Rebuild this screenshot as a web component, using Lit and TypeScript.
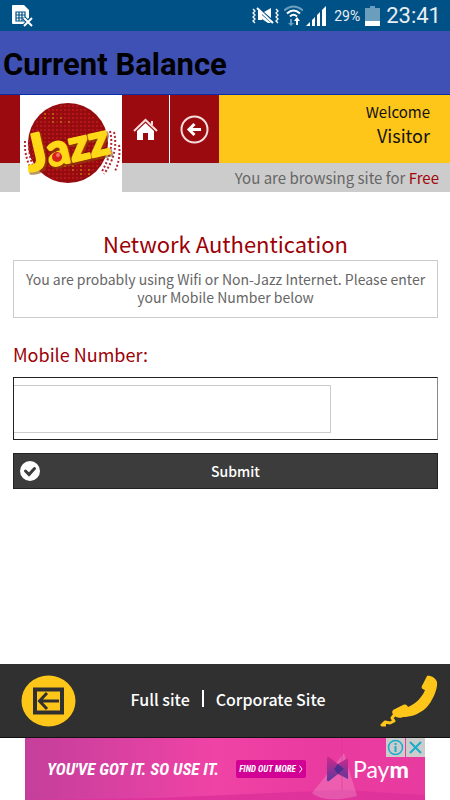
import { LitElement, html, css, svg } from "lit";
import { customElement, state } from "lit/decorators.js";

@customElement("status-bar")
export class StatusBar extends LitElement {
  static styles = css`
    :host {
      display: flex;
      align-items: center;
      height: 31px;
      padding: 0 9px 0 12px;
      background: #005286;
      color: #e8eef3;
      font-family: Roboto, sans-serif;
    }
    svg { display: block; flex: none; }
    .spacer { flex: 1; }
    .mute { margin-right: 5px; }
    .wifi { margin-right: 3px; }
    .signal { margin-right: 8px; }
    .percent { font-size: 14px; margin-right: 5px; }
    .battery { margin-right: 6px; }
    .time { font-size: 22px; line-height: 31px; }
  `;
  render() {
    return html`
      <svg width="21" height="23" viewBox="0 0 21 23" role="img" aria-label="No SIM">
        <path fill="#fff" d="M1 1H12L17 6V14L13 17V20H1Q0 20 0 19V2Q0 1 1 1Z" />
        <path fill="none" stroke="#005286" stroke-width="1.2" d="M4 8H13V17H4ZM4 11H13M4 14H13M7 8V17M10 8V17" />
        <path fill="none" stroke="#005286" stroke-width="4" d="M12 14L20 22M20 14L12 22" />
        <path fill="none" stroke="#fff" stroke-width="2" d="M12 14L20 22M20 14L12 22" />
      </svg>
      <span class="spacer"></span>
      <svg class="mute" width="27" height="19" viewBox="0 0 27 19" role="img" aria-label="Vibrate">
        <path fill="#fff" d="M6 4L10 7V14H6ZM12 6L19 2V12Z" />
        <path fill="none" stroke="#fff" stroke-width="2" d="M5 2L21 17" />
        <path fill="#fff" d="M10 9L19 17H16L10 13Z" />
        <path fill="none" stroke="#fff" stroke-width="1.3" d="M1 3L3 5L1 7L3 9L1 11L3 13L1 15L3 17M24 3L26 5L24 7L26 9L24 11L26 13L24 15L26 17" />
      </svg>
      <svg class="wifi" width="19" height="22" viewBox="0 0 19 22" role="img" aria-label="Wi-Fi">
        <g fill="none" stroke-width="2">
          <path stroke="#6b9dbd" d="M0 5.500Q9.500-2.500 19 5.500" />
          <path stroke="#fff" d="M3 8.500Q9.500 2.500 16 8.500M6 11.500Q9.500 8 13 11.500" />
        </g>
        <path fill="#6b9dbd" d="M6 14H8V18H10L7 21L4 18H6Z" />
        <path fill="#fff" d="M12 20V16H10L13 12L16 16H14V20Z" />
      </svg>
      <svg class="signal" width="20" height="20" viewBox="0 0 20 20" role="img" aria-label="Signal">
        <path fill="#fff" d="M0 20L4 16V20ZM6 14L9 11V20H6ZM11 9L14 6V20H11ZM16 4L20 0V20H16Z" />
      </svg>
      <span class="percent">29%</span>
      <svg class="battery" width="15" height="20" viewBox="0 0 15 20" role="img" aria-label="Battery">
        <path fill="#6b9dbd" d="M5 0H10V2H15V20H0V2H5Z" />
        <path fill="#fff" d="M0 15H15V20H0Z" />
      </svg>
      <span class="time">23:41</span>
    `;
  }
}

@customElement("site-header")
export class SiteHeader extends LitElement {
  static styles = css`
    :host {
      display: grid;
      grid-template-columns: 20px 102px 47px 1px 49px 1fr;
      grid-template-rows: 68px 29px;
      background: #9b0a0f;
      color: #111;
    }
    .logo { grid-column: 2; grid-row: 1 / 3; background: #fff; z-index: 1; }
    .logo svg { display: block; }
    .wordmark { font: 900 44px Lato, sans-serif; }
    .initial { font-size: 50px; }
    .paint { fill: #ffd817; stroke: #ffd817; stroke-width: 2; stroke-linejoin: round; }
    .shade { fill: #8a4a08; stroke: #8a4a08; stroke-width: 3; stroke-linejoin: round; opacity: 0.6; }
    .nav { display: grid; place-items: center; grid-row: 1; }
    .home { grid-column: 3; }
    .rule { grid-column: 4; grid-row: 1; background: #fff; }
    .back { grid-column: 5; }
    .welcome {
      grid-column: 6;
      grid-row: 1;
      padding: 7px 20px 0 0;
      background: #fec619;
      text-align: right;
      font-size: 15px;
      line-height: 20px;
    }
    .welcome .name { font-size: 18px; line-height: 26px; }
    .welcome p { margin: 0; }
    .notice {
      grid-column: 1 / 7;
      grid-row: 2;
      background: #ccc;
      color: #666;
      padding-right: 11px;
      text-align: right;
      font-size: 15px;
      line-height: 29px;
    }
    .free { color: #a0060c; }
  `;

  private specks() {
    const out = [];
    for (let y = 10; y < 86; y += 4) {
      for (let x = 12; x < 92; x += 4) {
        const dx = x - 51, dy = y - 47;
        if (dx * dx + dy * dy > 1450) continue;
        const gold = (x * 7 + y * 5) % 19 < 3 && Math.abs(dy) > 20;
        out.push(svg`<circle cx=${x} cy=${y} r="1" fill=${gold ? "#c47a10" : "#c01a22"} />`);
      }
    }
    return out;
  }

  render() {
    return html`
      <a class="logo" href="#home" aria-label="Jazz home">
        <svg width="102" height="97" viewBox="0 0 102 97">
          <circle cx="48" cy="48" r="40" fill="#950b0e" />
          <g transform="translate(-3 1)">${this.specks()}</g>
          <g fill="none" stroke="#b32830" stroke-width="2" stroke-dasharray="2 2">
            <path d="M90 36Q95 55 81 78M94 37Q99 58 84 79M99 50Q101 63 95 76M5 46Q4 60 11 74M9 45Q8 60 14 73" />
          </g>
          <g transform="rotate(-13 50 50)" class="wordmark">
            <text class="shade" x="5" y="69"><tspan class="initial">J</tspan>azz</text>
            <text class="paint" x="4" y="67"><tspan class="initial">J</tspan>azz</text>
          </g>
          <circle cx="37" cy="62" r="5" fill="#d5231c" />
          <circle cx="38" cy="60" r="2" fill="#f0736a" />
        </svg>
      </a>
      <a class="nav home" href="#home" aria-label="Home">
        <svg width="25" height="23" viewBox="0 0 25 23">
          <path fill="none" stroke="#f7dede" stroke-width="2" d="M1 13L12.500 2L24 13M19 3V7" />
          <path fill="#fff" d="M4 13L12.500 5L21 13V22H15V15H10V22H4Z" />
        </svg>
      </a>
      <span class="rule"></span>
      <a class="nav back" href="#back" aria-label="Back">
        <svg width="29" height="29" viewBox="0 0 29 29" fill="none" stroke="#f7dede">
          <circle cx="14.500" cy="14.500" r="13" stroke-width="2" />
          <path stroke-width="3" stroke="#fff" d="M21 14.500H9M14.500 9L9 14.500L14.500 20" />
        </svg>
      </a>
      <div class="welcome"><p>Welcome</p><p class="name">Visitor</p></div>
      <div class="notice">You are browsing site for <span class="free">Free</span></div>
    `;
  }
}

@customElement("site-footer")
export class SiteFooter extends LitElement {
  static styles = css`
    :host {
      display: flex;
      align-items: center;
      justify-content: space-between;
      height: 74px;
      padding: 0 12px 0 21px;
      background: #303030;
      border-bottom: 1px solid #111;
      box-sizing: border-box;
      color: #fff;
      font-size: 16px;
      font-weight: 500;
    }
    svg { display: block; }
    nav { display: flex; align-items: center; gap: 12px; margin-bottom: 4px; }
    nav a { color: inherit; text-decoration: none; }
    .bar { width: 2px; height: 17px; background: #fff; }
  `;
  render() {
    return html`
      <a href="#back" aria-label="Back">
        <svg width="55" height="52" viewBox="0 0 55 52">
          <ellipse cx="27.500" cy="26" rx="27" ry="25.500" fill="#fec619" />
          <rect x="14" y="14.500" width="27" height="23" fill="none" stroke="#303030" stroke-width="4" />
          <path d="M38 26H19M26 18L18.500 26L26 34" fill="none" stroke="#303030" stroke-width="3" />
        </svg>
      </a>
      <nav>
        <a href="#full">Full site</a>
        <span class="bar"></span>
        <a href="#corporate">Corporate Site</a>
      </nav>
      <a href="#call" aria-label="Call">
        <svg width="58" height="52" viewBox="0 0 58 52">
          <path fill="#fec619" d="M47 1C50 0 56 3 57 7C58 14 52 27 46 33C38 40 30 42 23 42C19 44 15 42 14 40C11 38 12 35 15 34L23 30C26 29 27 30 28 32C35 29 42 23 45 15C41 14 41 12 43 9Z" />
          <path fill="none" stroke="#fec619" stroke-width="3" stroke-linejoin="round" d="M15 39L12 43L14 46L10 48L5 47L2 50H6" />
        </svg>
      </a>
    `;
  }
}

@customElement("ad-banner")
export class AdBanner extends LitElement {
  static styles = css`
    :host {
      display: flex;
      position: relative;
      align-items: center;
      width: 400px;
      max-width: 100%;
      height: 62px;
      margin: 0 auto;
      padding-left: 22px;
      box-sizing: border-box;
      color: #fff;
      background: linear-gradient(to right, #c43f9b, #f043a6 48%, #e93a9f 75%, #e83ba0);
      font-family: "Roboto Condensed", Roboto, sans-serif;
      overflow: hidden;
    }
    .room { position: absolute; inset: 0; width: 100%; height: 100%; }
    .slogan, .more, .brand { position: relative; text-decoration: none; color: inherit; white-space: nowrap; }
    .slogan { width: 189px; font-size: 17px; font-weight: 700; font-style: italic; }
    .more {
      display: flex;
      align-items: center;
      justify-content: center;
      gap: 3px;
      width: 70px;
      height: 18px;
      border-radius: 2px;
      background: #d20094;
      font-size: 9px;
      font-style: italic;
      font-weight: 700;
    }
    .brand { display: flex; align-items: center; gap: 5px; margin-left: 21px; font: 23px Lato, sans-serif; }
    .brand b { font-weight: 900; }
    .mark { display: block; }
    .tools { position: absolute; top: 0; right: 0; display: flex; gap: 1px; }
    .tools button { display: block; width: 19px; height: 19px; padding: 0; border: 0; background: #ccc; }
    .tools svg { display: block; }
  `;
  render() {
    return html`
      <svg class="room" viewBox="0 0 400 62" preserveAspectRatio="none" aria-hidden="true">
        <path fill="#df339b" d="M0 62H400V57L317 52L130 60Z" />
        <path fill="#fff" opacity="0.180" d="M319 15L287 55Q300 66 332 58Z" />
        <path stroke="#d93699" d="M317 0V52" opacity="0.500" />
      </svg>
      <a class="slogan" href="#offer">YOU'VE GOT IT. SO USE IT.</a>
      <a class="more" href="#offer">
        <span>FIND OUT MORE</span>
        <svg width="4" height="8" viewBox="0 0 4 8"><path d="M0.500 0.500L3 4L0.500 7.500" fill="none" stroke="#fff" /></svg>
      </a>
      <a class="brand" href="#paym">
        <svg class="mark" width="21" height="26" viewBox="0 0 21 26">
          <defs>
            <linearGradient id="fold" x1="0" y1="0" x2="0" y2="1">
              <stop offset="0" stop-color="#d1288d" /><stop offset="1" stop-color="#57399a" />
            </linearGradient>
          </defs>
          <path fill="url(#fold)" d="M0 2Q0 0 2 1L11 8L19 3Q21 2 21 4V22Q21 24 19 22L11 18L2 25Q0 26 0 24Z" />
          <path fill="#3d2d8c" opacity="0.800" d="M11 8L17 13L11 18L7 13Z" />
        </svg>
        <span>Pay<b>m</b></span>
      </a>
      <div class="tools">
        <button aria-label="Ad information">
          <svg width="19" height="19" viewBox="0 0 19 19" fill="none" stroke="#17aecb">
            <circle cx="9.500" cy="9.500" r="7" stroke-width="1.500" />
            <path stroke-width="2" d="M9.500 8V14M9.500 5V7" />
          </svg>
        </button>
        <button aria-label="Close ad">
          <svg width="19" height="19" viewBox="0 0 19 19">
            <path stroke="#17aecb" stroke-width="2" d="M4 4L15 15M15 4L4 15" />
          </svg>
        </button>
      </div>
    `;
  }
}

@customElement("app-root")
export class AppRoot extends LitElement {
  @state() private mobile = "";

  static styles = css`
    :host {
      display: flex;
      flex-direction: column;
      min-height: 100vh;
      background: #fff;
      font-family: "Noto Sans CJK SC", "Noto Sans", sans-serif;
    }
    .title {
      margin: 0;
      padding: 2px 0 0 3px;
      background: #4051b5;
      border-bottom: 1px solid #0c2da8;
      box-sizing: border-box;
      color: #000;
      font: 700 31px/63px Roboto, sans-serif;
      height: 64px;
    }
    main { flex: 1; padding: 35px 12px 24px 13px; }
    h2 { margin: 0; color: #9c0006; font-size: 22px; font-weight: 400; line-height: 33px; text-align: center; }
    .info {
      margin: 0;
      padding: 9px 8px 11px;
      border: 1px solid #ccc;
      color: #666;
      font-size: 14px;
      line-height: 18px;
      text-align: center;
    }
    label { display: block; margin: 23px 0 10px; color: #9c0006; font-size: 18px; line-height: 26px; }
    .field { padding: 7px 0 6px; border: 1px solid #222; border-right-color: #888; }
    input {
      display: block;
      width: 75%;
      height: 48px;
      padding: 0 10px;
      border: 1px solid #ccc;
      border-left: 0;
      box-sizing: border-box;
      font: 18px "Noto Sans CJK SC", "Noto Sans", sans-serif;
    }
    .submit {
      display: grid;
      grid-template-columns: 20px 1fr;
      align-items: center;
      width: 100%;
      height: 36px;
      margin-top: 13px;
      padding: 0 6px;
      border: 1px solid #222;
      background: #3c3c3c;
      color: #fff;
      font: 500 14px "Noto Sans CJK SC", "Noto Sans", sans-serif;
    }
    .submit svg { display: block; }
  `;

  render() {
    return html`
      <status-bar></status-bar>
      <h1 class="title">Current Balance</h1>
      <site-header></site-header>
      <main>
        <h2>Network Authentication</h2>
        <p class="info">You are probably using Wifi or Non-Jazz Internet. Please enter your Mobile Number below</p>
        <form @submit=${(e: Event) => e.preventDefault()}>
          <label for="mobile">Mobile Number:</label>
          <div class="field">
            <input id="mobile" type="tel" .value=${this.mobile}
              @input=${(e: Event) => (this.mobile = (e.target as HTMLInputElement).value)} />
          </div>
          <button class="submit" type="submit">
            <svg width="20" height="20" viewBox="0 0 20 20">
              <circle cx="10" cy="10" r="10" fill="#fff" />
              <path fill="none" stroke="#3c3c3c" stroke-width="3" stroke-linecap="round" d="M5.500 10L9 13.500L14.500 7.500" />
            </svg>
            <span>Submit</span>
          </button>
        </form>
      </main>
      <site-footer></site-footer>
      <ad-banner></ad-banner>
    `;
  }
}
